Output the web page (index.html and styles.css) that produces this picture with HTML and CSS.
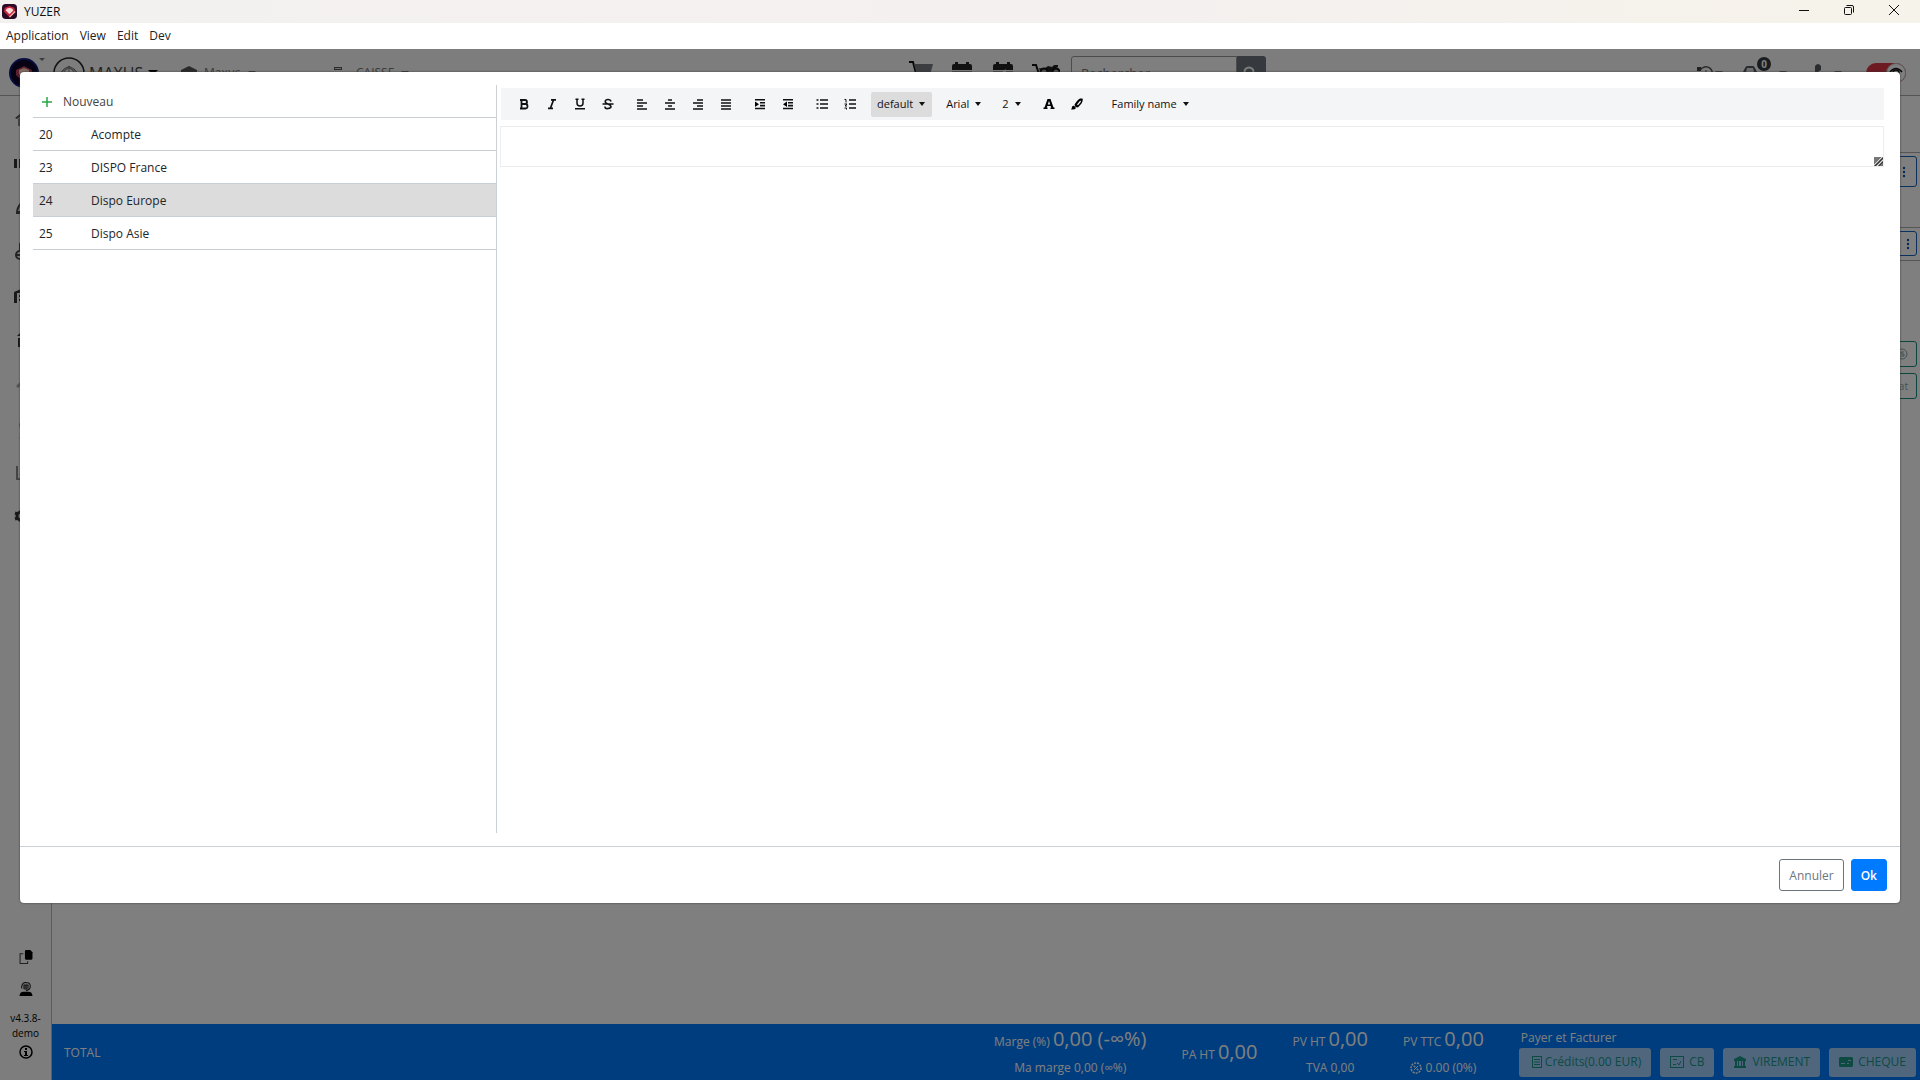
FILE: index.html
```html
<!DOCTYPE html>
<html lang="fr">
<head>
<meta charset="utf-8">
<title>YUZER</title>
<link rel="stylesheet" href="styles.css">
</head>
<body>
<svg class="defs" width="0" height="0" aria-hidden="true">
  <symbol id="lines-left" viewBox="0 0 12 12"><path d="M1 2h6M1 5h10M1 8h6M1 11h10" stroke="currentColor" stroke-width="1.7"/></symbol>
  <symbol id="gem" viewBox="0 0 16 16"><rect width="16" height="16" rx="4" fill="#2a0b25"/><path d="M3 4l5-2 5 2 1 4-6 6-6-6z" fill="#c8233f"/><path d="M5 5l3-1 3 1 1 2-4 4-4-4z" fill="#fbd9d5"/><path d="M8 14l6-6" stroke="#f5b6a8" stroke-width="1.5"/></symbol>
</svg>

<header class="titlebar">
  <svg class="app-icon" viewBox="0 0 16 16"><use href="#gem"/></svg>
  <span class="app-name">YUZER</span>
  <div class="window-buttons">
    <button type="button" aria-label="Réduire"><svg viewBox="0 0 10 10"><path d="M0 5.500h10"/></svg></button>
    <button type="button" aria-label="Restaurer"><svg viewBox="0 0 10 10"><rect x=".5" y="2.500" width="7" height="7" rx="1"/><path d="M2.500.5h5.500q1.500 0 1.500 1.500v5.500"/></svg></button>
    <button type="button" aria-label="Fermer"><svg viewBox="0 0 10 10"><path d="M0 0l10 10M10 0L0 10"/></svg></button>
  </div>
</header>
<nav class="menubar">
  <button type="button">Application</button>
  <button type="button">View</button>
  <button type="button">Edit</button>
  <button type="button">Dev</button>
</nav>

<div class="workspace">
  <div class="topbar">
    <div class="avatar"><svg viewBox="0 0 30 30"><circle cx="15" cy="15" r="15" fill="#10187a"/><circle cx="15" cy="15" r="13" fill="#0c0428"/><path d="M7 12l8-4 8 4v5l-8 7-8-7z" fill="#b8405a"/><path d="M10 12l5-2 5 2v4l-5 4-5-4z" fill="#ffd9c0"/></svg><i class="caret"></i></div>
    <button type="button" class="top-item brand"><svg class="ring" viewBox="0 0 32 32" fill="none" stroke="#222"><circle cx="16" cy="16" r="15" stroke-width="1.500"/><path d="M6 18q10-16 20 0M10 17q6-12 12 0M8 16l8-7 8 7M16 9v14" stroke="#777"/></svg>MAXUS<i class="caret"></i></button>
    <button type="button" class="top-item company"><svg class="ico16" viewBox="0 0 16 16"><path d="M0 5l8-4 8 4v9H0z" fill="#555"/><path d="M4 8h8v6H4z" fill="#ddd"/></svg>Maxus<i class="caret"></i></button>
    <button type="button" class="top-item till"><svg class="ico16" viewBox="0 0 16 16"><path d="M1 2h8v3H1zM2 7h9l4 4v4H2z" fill="#555"/><path d="M2 3.500h6" stroke="#ddd"/></svg>CAISSE<i class="caret"></i></button>
    <div class="shortcuts">
      <svg viewBox="0 0 24 24"><path d="M0 1h4l4 15h13" fill="none" stroke="#111" stroke-width="2"/><path d="M5 3h19l-3 11H8z" fill="#777b80"/><circle cx="10" cy="20" r="2"/><circle cx="19" cy="20" r="2"/></svg>
      <svg viewBox="0 0 24 24"><path d="M2 9V5q0-2 2-2h1V1h3v2h8V1h3v2h1q2 0 2 2v4z" fill="#222"/><path d="M2 10h20v13H2z" fill="#999da0"/></svg>
      <svg viewBox="0 0 24 24"><path d="M2 9V5q0-2 2-2h1V1h3v2h8V1h3v2h1q2 0 2 2v4z" fill="#222"/><path d="M2 10h20v13H2z" fill="#999da0"/><path d="M15 9l-3 3 3 3" fill="none" stroke="#fff" stroke-width="2"/></svg>
      <svg class="moto" viewBox="0 0 28 24"><path d="M0 4h4l4 12h13" fill="none" stroke="#111" stroke-width="2"/><path d="M7 7l5 1 4-3 4 1 2-2h4v2l-2 1 1 3-6 3H9z" fill="#222"/><circle cx="12" cy="11" r="3.500" fill="#999" stroke="#111" stroke-width="2"/><circle cx="24" cy="11" r="3.500" fill="#999" stroke="#111" stroke-width="2"/></svg>
    </div>
    <div class="search"><input type="search" placeholder="Rechercher" aria-label="Rechercher"><button type="button" aria-label="Lancer la recherche"><svg viewBox="0 0 16 16" fill="none" stroke="#fff" stroke-width="2"><circle cx="7" cy="7" r="4.500"/><path d="M10.500 10.500L15 15"/></svg></button></div>
    <div class="status">
      <button type="button" aria-label="Historique récent"><svg class="ico16" viewBox="0 0 16 16" fill="none" stroke="#555"><path d="M3 5.500A6.500 6.500 0 1 1 3 11" stroke-width="1.500"/><path d="M0 2h4v4H0z" fill="#444" stroke="none"/><path d="M9 5v4h3"/></svg><i class="caret"></i></button>
      <button type="button" class="cars"><svg class="car" viewBox="0 0 18 16"><path d="M1 9l3-6q1-2 2-2h6q1 0 2 2l3 6v6H1z" fill="#50565e"/><path d="M5 7l1-4h6l1 4z" fill="#ddd"/></svg><span class="badge">0</span><i class="caret"></i></button>
      <button type="button" class="phone" aria-label="Appels"><svg viewBox="0 0 8 20"><path d="M1 3q3-4 6 0v4q-3 1-3 4t3 4v3H1z" fill="#555b60"/></svg><i class="caret"></i></button>
      <div class="toggle"><svg viewBox="0 0 20 20" fill="none" stroke="#111" stroke-width="1.500"><circle cx="10" cy="10" r="9.500" fill="#fff" stroke="#bbb" stroke-width="1"/><path d="M4 9q6-7 12 0"/><circle cx="10" cy="10" r="3"/></svg></div>
    </div>
  </div>

  <div class="columns">
    <aside class="sidebar">
      <ul class="side-icons">
        <li><svg viewBox="0 0 24 24" fill="#555"><path d="M1 10L12 1l11 9-2 1-9-7-9 7z"/><path d="M4 11l8-6 8 6v7H4z" fill="#888"/></svg></li>
        <li><svg viewBox="0 0 24 24" fill="#333"><path d="M0 7h3v9H0zM5 7h16v9H5z"/></svg></li>
        <li><svg viewBox="0 0 24 24" fill="#444"><path d="M2 18q0-7 4-11h12q4 4 4 11zM6 10l-2 5h4z" fill-rule="evenodd"/></svg></li>
        <li><svg viewBox="0 0 24 24" fill="none" stroke="#444" stroke-width="2"><circle cx="6" cy="15" r="4"/><circle cx="18" cy="15" r="4"/><path d="M3 15h6M6 11V5l6 6h6"/></svg></li>
        <li><svg viewBox="0 0 24 24" fill="#333"><path d="M0 19V8l12-5 12 5v11h-3V9H3v10z"/><path d="M5 11h14v2H5zM5 15h14v2H5z"/></svg></li>
        <li><svg viewBox="0 0 24 24" fill="#333"><path d="M3 8l4-4h10l4 4zM4 10h16v9H4z"/></svg></li>
        <li><svg viewBox="0 0 24 24" fill="none" stroke="#aaa" stroke-width="3"><path d="M3 15l7-6 5 4 6-8"/></svg></li>
        <li><svg viewBox="0 0 24 24" fill="none" stroke="#444" stroke-width="3"><path d="M17 8q-10-4-10 1t5 5 5 5-11 2"/></svg></li>
        <li><svg viewBox="0 0 24 24" fill="none" stroke="#888" stroke-width="2"><path d="M3 6v13h18"/><path d="M6 15l5-5 4 3 6-7"/></svg></li>
        <li><svg viewBox="0 0 24 24" fill="none" stroke="#333" stroke-width="3"><circle cx="7" cy="12" r="4"/><path d="M7 6v2M7 16v2M1 9l3 1M1 15l3-1M10 10l2-1M10 14l2 1"/></svg></li>
      </ul>
      <div class="side-foot">
        <button type="button" aria-label="Copier"><svg viewBox="0 0 12 13"><path d="M6 0h4l2 2v6q0 1-1 1H6Q5 9 5 8V1q0-1 1-1z"/><path d="M3.500 3.500h-3v9h7v-2" fill="none" stroke="#444"/></svg></button>
        <button type="button" aria-label="Assistance"><svg viewBox="0 0 12 13"><path d="M0 13q0-4 4-4h4q4 0 4 4z"/><circle cx="6" cy="4.500" r="3" fill="#888"/><path d="M2 6V4q1-4 4-3.500Q10 .5 10 4q0 3.500-4 4M4 3.500h4M4 5.500h3" fill="none" stroke="#222"/></svg></button>
        <p>v4.3.8-<br>demo</p>
        <button type="button" aria-label="Informations"><svg viewBox="0 0 14 14"><circle cx="7" cy="7" r="6" fill="none" stroke="#000" stroke-width="1.500"/><path d="M6 3h2v2H6zM5 6h3v4h1v1H5v-1h1V7H5z"/></svg></button>
      </div>
    </aside>
    <div class="content">
      <main class="panels">
        <div class="line-row tall"><button type="button" aria-label="Options du client"><svg viewBox="0 0 4 12"><circle cx="2" cy="2" r="1.200"/><circle cx="2" cy="6" r="1.200"/><circle cx="2" cy="10" r="1.200"/></svg></button></div>
        <div class="line-row"><button type="button" aria-label="Options du véhicule"><svg viewBox="0 0 4 12"><circle cx="2" cy="2" r="1.200"/><circle cx="2" cy="6" r="1.200"/><circle cx="2" cy="10" r="1.200"/></svg></button></div>
        <div class="actions">
          <button type="button" aria-label="Historique"><svg viewBox="0 0 12 12" fill="none" stroke="currentColor"><circle cx="6" cy="6" r="5"/><path d="M8 4H5v2h3v2H4"/></svg></button>
          <button type="button">Achat</button>
        </div>
      </main>
      <footer class="totals">
        <strong class="total-label">TOTAL</strong>
        <div class="figure"><p>Marge (%) <b>0,00 (-∞%)</b></p><p>Ma marge 0,00 (∞%)</p></div>
        <div class="figure"><p>PA HT <b>0,00</b></p></div>
        <div class="figure"><p>PV HT <b>0,00</b></p><p>TVA 0,00</p></div>
        <div class="figure"><p>PV TTC <b>0,00</b></p><p><svg viewBox="0 0 12 12" fill="none" stroke="#fff"><circle cx="6" cy="6" r="5" stroke-width="1.500" stroke-dasharray="2 1"/><path d="M4 8l4-4"/><circle cx="4.500" cy="4.500" r=".6"/><circle cx="7.500" cy="7.500" r=".6"/></svg> 0.00 (0%)</p></div>
        <div class="pay">
          <p>Payer et Facturer</p>
          <div class="pay-buttons">
            <button type="button" disabled class="credit"><svg viewBox="0 0 12 12" fill="none" stroke="currentColor"><rect x="1.500" y=".5" width="9" height="11"/><path d="M3 3.500h6M3 6h6M3 8.500h6"/></svg>Crédits(0.00 EUR)</button>
            <button type="button" disabled><svg viewBox="0 0 14 12" fill="none" stroke="currentColor"><rect x=".5" y=".5" width="13" height="11"/><path d="M3 8.500h3M7 7l2 2 2-4M3 3.500h4"/></svg>CB</button>
            <button type="button" disabled><svg viewBox="0 0 12 12" fill="currentColor"><path d="M6 0l6 3v2H0V3zM1 5h2v5H1zM4 5h1v5H4zM7 5h1v5H7zM9 5h2v5H9zM0 10h12v2H0z"/></svg>VIREMENT</button>
            <button type="button" disabled><svg viewBox="0 0 14 12" fill="currentColor"><path fill-rule="evenodd" d="M1 1h12l1 1v8l-1 1H1l-1-1V2zM2 7v1h4V7zM8 7v1h2V7zM9 4v1h3V4z"/></svg>CHEQUE</button>
          </div>
        </div>
      </footer>
    </div>
  </div>

  <div class="overlay">
    <section class="modal" role="dialog" aria-label="Modèles de texte">
      <div class="modal-body">
        <div class="templates">
          <button type="button" class="new"><svg viewBox="0 0 10 10"><path d="M5 0v10M0 5h10" stroke="#28a745" stroke-width="1.500"/></svg>Nouveau</button>
          <table>
            <tr><td>20</td><td>Acompte</td></tr>
            <tr><td>23</td><td>DISPO France</td></tr>
            <tr class="selected"><td>24</td><td>Dispo Europe</td></tr>
            <tr><td>25</td><td>Dispo Asie</td></tr>
          </table>
        </div>
        <div class="editor">
          <div class="toolbar" role="toolbar">
            <div class="group">
              <button type="button" aria-label="Gras"><svg viewBox="0 0 12 12" fill="none" stroke="#111" stroke-width="1.800"><path d="M2 2h5q2 0 2 2t-2 2H3.500H7.500q2 0 2 2.300T7.500 10.500H2M3.500 2v8.500"/></svg></button>
              <button type="button" aria-label="Italique"><svg viewBox="0 0 12 12" fill="none" stroke="#111" stroke-width="1.700"><path d="M5 1.800h5M2 10.300h5M7.500 2l-3 8"/></svg></button>
              <button type="button" aria-label="Souligné"><svg viewBox="0 0 12 12" fill="none" stroke="#111" stroke-width="1.500"><path d="M1.500 1.300h3M7.500 1.300h3M3 1v4q0 3 3 3t3-3V1M1 10.800h10"/></svg></button>
              <button type="button" aria-label="Barré"><svg viewBox="0 0 12 12" fill="none" stroke="#111" stroke-width="1.600"><path d="M9 3.500Q8.500 1.500 6 1.500T3.200 3.500Q3.200 5 6 6t3 2.500-3 2-3-2M.5 6h11"/></svg></button>
            </div>
            <div class="group">
              <button type="button" aria-label="Aligner à gauche"><svg viewBox="0 0 12 12"><use href="#lines-left"/></svg></button>
              <button type="button" aria-label="Centrer"><svg viewBox="0 0 12 12" stroke="#111" stroke-width="1.700"><path d="M4 2h4M1 5h10M4 8h4M1 11h10"/></svg></button>
              <button type="button" aria-label="Aligner à droite"><svg viewBox="0 0 12 12" stroke="#111" stroke-width="1.700"><path d="M5 2h6M1 5h10M5 8h6M1 11h10"/></svg></button>
              <button type="button" aria-label="Justifier"><svg viewBox="0 0 12 12" stroke="#111" stroke-width="1.700"><path d="M1 2h10M1 5h10M1 8h10M1 11h10"/></svg></button>
            </div>
            <div class="group">
              <button type="button" aria-label="Augmenter le retrait"><svg viewBox="0 0 12 12" stroke="#111" stroke-width="1.600"><path d="M1 1.800h10M6 4.800h5M6 7.600h5M1 10.500h10"/><path d="M1 3.500l4 2.700-4 2.700z" stroke="none"/></svg></button>
              <button type="button" aria-label="Diminuer le retrait"><svg viewBox="0 0 12 12" stroke="#111" stroke-width="1.600"><path d="M1 1.800h10M6 4.800h5M6 7.600h5M1 10.500h10"/><path d="M5 3.500L1 6.200l4 2.700z" stroke="none"/></svg></button>
            </div>
            <div class="group">
              <button type="button" aria-label="Liste à puces"><svg viewBox="0 0 12 12" stroke="#111" stroke-width="1.600"><path d="M4 2h8M4 6h8M4 10h8M.5 2h2M.5 6h2M.5 10h2"/></svg></button>
              <button type="button" aria-label="Liste numérotée"><svg viewBox="0 0 12 12" stroke="#111" stroke-width="1.600"><path d="M5 2h7M5 6h7M5 10h7"/><path d="M.5 1.500h1.500v3M.5 6h2.500l-2 2h2M.5 10h2v1.500" stroke-width="1" fill="none"/></svg></button>
            </div>
            <button type="button" class="drop active">default<i class="caret"></i></button>
            <button type="button" class="drop">Arial<i class="caret"></i></button>
            <button type="button" class="drop">2<i class="caret"></i></button>
            <div class="group">
              <button type="button" aria-label="Couleur du texte"><svg viewBox="0 0 12 12"><path fill-rule="evenodd" d="M4.500 1h3l3 8.500h1V11H7.500V9.500h.7L7.700 8H4.300l-.5 1.500h.7V11H.5V9.500h1zM6 3L4.800 6.500h2.400z"/></svg></button>
              <button type="button" aria-label="Surligner"><svg viewBox="0 0 12 12"><path fill-rule="evenodd" d="M9 .5h2.500q.8 2-1 5L7 9.500 4.500 9 3.500 6.500 6 3Q7.500 1 9 .5zM9.300 2.500L6 6.500l1 .8 3-3.600z"/><path d="M3 7.500l2 2.500q-1 2-5 1.500Q1 10.500 1 8.500z"/></svg></button>
            </div>
            <button type="button" class="drop family">Family name<i class="caret"></i></button>
          </div>
          <div class="text-area">
            <textarea aria-label="Texte du modèle" rows="1"></textarea>
            <svg class="grip" viewBox="0 0 9 9"><path d="M0 0h9v9H0z" fill="#777"/><path d="M0 8l8-8M3 9l6-6" stroke="#ddd"/><path d="M1 9l8-8M5 9l4-4" stroke="#333"/></svg>
          </div>
        </div>
      </div>
      <div class="modal-footer">
        <button type="button" class="btn cancel">Annuler</button>
        <button type="button" class="btn ok">Ok</button>
      </div>
    </section>
  </div>
</div>
</body>
</html>
```
FILE: styles.css
```css
* { box-sizing: border-box; }
body {
  margin: 0;
  min-height: 100vh;
  display: flex;
  flex-direction: column;
  font: 12px/20px "Open Sans", "Noto Sans", sans-serif;
  color: #212529;
  background: #fff;
}
button {
  font: inherit;
  color: inherit;
  background: none;
  border: 0;
  padding: 0;
}
p, ul { margin: 0; padding: 0; list-style: none; }
svg { display: block; flex: none; }
.defs { position: absolute; }
.caret {
  border: 4px solid transparent;
  border-top-color: currentColor;
  border-bottom: 0;
  flex: none;
}

/* window frame */
.titlebar {
  display: flex;
  align-items: center;
  height: 23px;
  padding-left: 2px;
  gap: 7px;
  color: #111;
  background: linear-gradient(90deg, #f3f1f0, #f4f0ef 60%, #f6f3ea);
}
.app-icon { width: 15px; height: 15px; }
.window-buttons { display: flex; margin-left: auto; padding-right: 3px; }
.window-buttons button { width: 45px; height: 23px; padding: 0 0 3px 17px; }
.window-buttons svg { width: 10px; height: 10px; fill: none; stroke: #111; }
.menubar {
  display: flex;
  align-items: center;
  gap: 11px;
  height: 26px;
  padding-left: 6px;
  color: #222;
}

/* application behind the dialog */
.workspace {
  position: relative;
  flex: 1;
  display: flex;
  flex-direction: column;
  background: #fff;
}
.topbar {
  display: flex;
  align-items: center;
  height: 47px;
  padding: 1px 14px 0 9px;
  background: #f8fbf9;
  border-bottom: 1px solid #aaa;
  color: #777;
}
.topbar button { display: flex; align-items: center; }
.avatar { display: flex; margin-right: 8px; }
.avatar svg { width: 30px; height: 30px; }
.avatar .caret { border-width: 3px 3px 0; }
.top-item { gap: 7px; }
.brand { width: 128px; gap: 4px; font-size: 16px; color: #444; }
.brand .caret { border-width: 5px 5px 0; margin-left: 1px; color: #000; }
.ring { width: 32px; height: 32px; }
.company { width: 152px; }
.ico16 { width: 16px; height: 16px; }
.till { flex: 0 1 400px; }
.shortcuts { display: flex; gap: 17px; flex: 1; justify-content: flex-end; }
.shortcuts svg { width: 24px; height: 24px; }
.shortcuts .moto { width: 28px; }
.search { display: flex; margin-left: 11px; margin-right: 431px; }
.search input {
  width: 166px;
  height: 34px;
  padding: 0 9px;
  border: 1px solid #999;
  border-radius: 3px 0 0 3px;
  font: inherit;
  font-size: 13px;
  background: #fff;
}
.search button { width: 29px; padding-left: 5px; background: #6c757d; border-radius: 0 3px 3px 0; }
.search button svg { width: 16px; height: 16px; }
.status { display: flex; align-items: center; gap: 18px; }
.status button { gap: 2px; }
.cars svg { width: 18px; height: 16px; }
.status .cars { position: relative; gap: 20px; }
.badge {
  position: absolute;
  left: 16px;
  top: -8px;
  width: 14px;
  height: 14px;
  border-radius: 7px;
  background: #343a40;
  color: #fff;
  font-size: 10px;
  font-weight: 700;
  line-height: 14px;
  text-align: center;
}
.status .phone { margin-left: 9px; gap: 12px; }
.phone svg { width: 8px; height: 20px; }
.toggle { width: 40px; height: 20px; border-radius: 10px; background: #dc3545; margin-left: 6px; }
.toggle svg { width: 20px; height: 20px; margin-left: auto; }

.columns { flex: 1; display: flex; }
.sidebar {
  width: 52px;
  display: flex;
  flex-direction: column;
  justify-content: space-between;
  align-items: center;
  background: #f8fbf9;
  border-right: 1px solid #bbb;
}
.side-icons { padding-top: 2px; }
.side-icons svg { width: 24px; height: 24px; }
.side-icons li { padding: 10px 0; }
.side-foot {
  display: flex;
  flex-direction: column;
  align-items: center;
  padding-bottom: 21px;
  font-size: 10px;
  line-height: 15px;
  text-align: center;
  color: #000;
}
.side-foot svg { width: 14px; height: 14px; }
.side-foot button { padding-bottom: 18px; }
.side-foot button:nth-child(2) { padding-bottom: 15px; }
.side-foot button:last-child { padding: 4px 0 0; }

.content { flex: 1; display: flex; flex-direction: column; }
.panels { flex: 1; padding-top: 56px; }
.line-row { display: flex; justify-content: flex-end; padding: 3px 3px 4px; border-top: 1px solid #aaa; border-bottom: 1px solid #aaa; }
.line-row.tall { height: 75px; border-bottom: 0; }
.line-row button { width: 44px; height: 25px; padding-left: 32px; border: 1px solid #1560bd; border-radius: 3px; }
.line-row.tall button { height: 31px; padding-left: 28px; }
.line-row svg { width: 4px; height: 12px; fill: #0056b3; }
.actions { display: flex; flex-direction: column; align-items: flex-end; gap: 6px; padding: 80px 3px 0; }
.actions button { width: 52px; height: 26px; padding-right: 8px; display: flex; align-items: center; justify-content: flex-end; border: 1px solid #178a80; border-radius: 3px; color: #7fa5a1; font-size: 10px; }
.actions svg { width: 12px; height: 12px; }

.totals {
  display: flex;
  align-items: center;
  gap: 35px;
  height: 56px;
  padding: 0 4px 0 12px;
  background: #007bff;
  color: #fff;
  white-space: nowrap;
}
.total-label { font-weight: 400; flex: 1; padding-top: 2px; }
.figure { text-align: center; padding-top: 2px; }
.figure p { line-height: 26px; }
.figure b { font-weight: 400; font-size: 20px; }
.figure svg { display: inline-block; width: 12px; height: 12px; vertical-align: -2px; }
.pay p { padding-left: 2px; }
.pay-buttons { display: flex; gap: 9px; }
.pay-buttons button {
  display: flex;
  align-items: center;
  gap: 5px;
  height: 29px;
  padding: 0 10px;
  border-radius: 3px;
  background: #f8f9fa;
  color: #28a745;
  opacity: .65;
}
.pay-buttons .credit { gap: 2px; padding-left: 12px; }
.pay-buttons svg { height: 12px; width: 14px; }
.pay-buttons .credit svg { width: 12px; }

/* dialog */
.overlay {
  position: absolute;
  inset: 0;
  padding: 23px 20px;
  background: rgba(0, 0, 0, .5);
}
.modal { background: #fff; border-radius: 4px; box-shadow: 0 0 2px #333; }
.modal-body { display: flex; gap: 3px; padding: 13px 16px 13px 13px; min-height: calc(100vh - 306px); }
.templates { width: 464px; border-right: 1px solid #ccd1d5; }
.new {
  display: flex;
  align-items: center;
  gap: 11px;
  width: 100%;
  height: 33px;
  padding-left: 9px;
  padding-top: 2px;
  border-bottom: 1px solid #c8ced3;
  color: #444;
}
.new svg { width: 10px; height: 10px; }
table { width: 100%; border-spacing: 0; }
td { height: 33px; padding: 2px 0 0 6px; border-bottom: 1px solid #c8ced3; }
td:first-child { width: 52px; }
.selected { background: #dcdcdc; }
.editor { flex: 1; padding-top: 3px; }
.toolbar {
  display: flex;
  align-items: center;
  gap: 8px;
  height: 32px;
  padding-left: 10px;
  margin-left: 1px;
  background: #f4f5f7;
  font-size: 11px;
  color: #111;
}
.group { display: flex; gap: 2px; }
.group button { width: 26px; height: 25px; padding: 0 7px; }
.group svg { width: 12px; height: 12px; }
.drop { display: flex; align-items: center; gap: 5px; height: 25px; padding: 0 6px; border-radius: 2px; }
.drop .caret { border-width: 4px 3px 0; margin: 0 1px; }
.drop.active { background: #dcdcdc; }
.drop.family { padding-left: 14px; }
.text-area { position: relative; margin-top: 6px; }
textarea {
  display: block;
  width: 100%;
  height: 41px;
  padding: 8px;
  border: 1px solid #ebeef0;
  resize: none;
  font: inherit;
}
.grip { position: absolute; right: 1px; bottom: 1px; width: 9px; height: 9px; }
.modal-footer {
  display: flex;
  justify-content: flex-end;
  gap: 7px;
  padding: 12px 13px;
  border-top: 1px solid #ccd1d5;
}
.btn { height: 32px; padding: 1px 9px 0; border: 1px solid #6c757d; border-radius: 3px; color: #6c757d; }
.btn.ok { background: #007bff; border-color: #007bff; color: #fff; font-weight: 600; }
```
